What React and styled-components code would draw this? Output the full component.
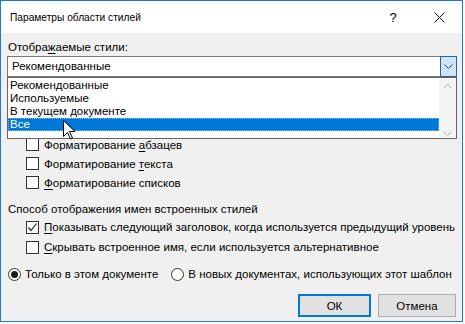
import React from 'react';
import styled, { createGlobalStyle } from 'styled-components';

const Global = createGlobalStyle`
  html, body { margin: 0; padding: 0; background: #ffffff; }
  body {
    font-family: "Liberation Sans", Arial, sans-serif;
    font-size: 11.5px;
    color: #000;
  }
  #root { width: 465px; height: 324px; }
`;

const Window = styled.div`
  position: relative;
  width: 461px;
  height: 320px;
  border: 1px solid #1f7bd1;
  background: #f0f0f0;
  display: flex;
  flex-direction: column;
  overflow: hidden;
`;

const TitleBar = styled.div`
  height: 32px;
  flex: none;
  background: #ffffff;
  display: flex;
  align-items: center;
  padding-left: 9px;
`;

const Title = styled.div`
  flex: 1;
  font-size: 10.2px;
  line-height: 16px;
  padding-top: 2px;
`;

const TitleButton = styled.div`
  width: 46px;
  height: 32px;
  display: flex;
  align-items: center;
  justify-content: center;
  font-size: 13px;
  padding-top: 1px;
  box-sizing: border-box;
`;

const Body = styled.div`
  position: relative;
  flex: 1;
  display: flex;
  flex-direction: column;
  padding: 0 5px 0 6px;
`;

const Label = styled.div`
  line-height: 16px;
  margin-top: ${p => p.$mt || 0}px;
  padding-left: 1px;
  white-space: nowrap;
`;

const U = styled.span`
  text-decoration: underline;
  text-underline-offset: 2px;
`;

const Combo = styled.div`
  margin-top: ${p => p.$mt || 0}px;
  height: 21px;
  box-sizing: border-box;
  border: 1px solid ${p => (p.$active ? '#7a7a7a' : '#adadad')};
  background: #ffffff;
  display: flex;
  align-items: stretch;
`;

const ComboText = styled.div`
  flex: 1;
  padding-left: 4px;
  line-height: 19px;
`;

const ComboButton = styled.div`
  width: 17px;
  box-sizing: border-box;
  margin: -1px -1px -1px 0;
  height: 21px;
  border: 1px solid ${p => (p.$active ? '#2c628b' : 'transparent')};
  background: ${p => (p.$active ? '#cce4f7' : 'transparent')};
  display: flex;
  align-items: center;
  justify-content: center;
`;

const CheckRow = styled.div`
  height: ${p => p.$h || 19}px;
  display: flex;
  align-items: center;
  padding-left: 19px;
  gap: 5px;
  white-space: nowrap;
`;

const Box = styled.div`
  width: 13px;
  height: 13px;
  box-sizing: border-box;
  border: 1px solid #333333;
  background: #ffffff;
  display: flex;
  align-items: center;
  justify-content: center;
  flex: none;
`;

const RadioRow = styled.div`
  margin-top: 8px;
  height: 18px;
  display: flex;
  align-items: center;
  padding-left: 1px;
  white-space: nowrap;
`;

const RadioItem = styled.div`
  display: flex;
  align-items: center;
  gap: 4px;
  margin-right: 13px;
`;

const Radio = styled.div`
  width: 13px;
  height: 13px;
  box-sizing: border-box;
  border-radius: 50%;
  border: 1px solid #333333;
  background: #ffffff;
  display: flex;
  align-items: center;
  justify-content: center;
  flex: none;
  &::after {
    content: '';
    display: ${p => (p.$on ? 'block' : 'none')};
    width: 7px;
    height: 7px;
    border-radius: 50%;
    background: #1a1a1a;
  }
`;

const Buttons = styled.div`
  margin-top: 11px;
  display: flex;
  justify-content: flex-end;
  gap: 7px;
  padding-right: 1px;
`;

const Button = styled.div`
  width: ${p => p.$w}px;
  height: 23px;
  box-sizing: border-box;
  border: ${p => (p.$default ? '2px solid #0078d7' : '1px solid #adadad')};
  background: #e1e1e1;
  display: flex;
  align-items: center;
  justify-content: center;
`;

const DropList = styled.div`
  position: absolute;
  left: 6px;
  top: 44px;
  width: 450px;
  height: 62px;
  box-sizing: border-box;
  border: 1px solid #646464;
  background: #ffffff;
  display: flex;
`;

const Items = styled.div`
  flex: 1;
  display: flex;
  flex-direction: column;
  padding-top: 1px;
`;

const Item = styled.div`
  height: 13px;
  line-height: 13px;
  padding-left: 2px;
  box-sizing: border-box;
  background: ${p => (p.$sel ? '#0078d7' : 'transparent')};
  color: ${p => (p.$sel ? '#ffffff' : '#000')};
  outline: ${p => (p.$sel ? '1px dotted #7fb9ea' : 'none')};
  outline-offset: -1px;
  white-space: nowrap;
`;

const ScrollBar = styled.div`
  width: 17px;
  background: #f4f4f4;
  display: flex;
  flex-direction: column;
  justify-content: space-between;
  align-items: center;
  padding: 6px 0 2px;
`;

const Cursor = styled.svg`
  position: absolute;
  left: 62px;
  top: 119px;
`;

const Chevron = ({ up, color = '#444' }) => (
  <svg width="9" height="5" viewBox="0 0 9 5">
    <path
      d={up ? 'M0.5 4.5 L4.5 0.5 L8.5 4.5' : 'M0.5 0.5 L4.5 4.5 L8.5 0.5'}
      fill="none"
      stroke={color}
      strokeWidth="1"
    />
  </svg>
);

const Check = () => (
  <svg width="11" height="11" viewBox="0 0 11 11">
    <path d="M1.5 5.5 L4 8.5 L9.5 1.5" fill="none" stroke="#222" strokeWidth="1.2" />
  </svg>
);

export default function App() {
  return (
    <>
      <Global />
      <Window>
        <TitleBar>
          <Title>Параметры области стилей</Title>
          <TitleButton>?</TitleButton>
          <TitleButton>
            <svg width="11" height="11" viewBox="0 0 11 11">
              <path d="M0.5 0.5 L10.5 10.5 M10.5 0.5 L0.5 10.5" stroke="#111" strokeWidth="1" />
            </svg>
          </TitleButton>
        </TitleBar>
        <Body>
          <Label $mt={6}>
            Отобра<U>ж</U>аемые стили:
          </Label>
          <Combo $mt={1} $active>
            <ComboText>Рекомендованные</ComboText>
            <ComboButton $active>
              <Chevron />
            </ComboButton>
          </Combo>
          <Label $mt={5}>Выберите способ сортировки списка:</Label>
          <Combo>
            <ComboText>По рекомендации</ComboText>
            <ComboButton>
              <Chevron />
            </ComboButton>
          </Combo>
          <Label>Выберите форматирование, отображаемое как стили:</Label>
          <CheckRow>
            <Box />
            <span>
              Форматирование <U>а</U>бзацев
            </span>
          </CheckRow>
          <CheckRow>
            <Box />
            <span>
              Форматирование <U>т</U>екста
            </span>
          </CheckRow>
          <CheckRow>
            <Box />
            <span>
              <U>Ф</U>орматирование списков
            </span>
          </CheckRow>
          <Label $mt={9}>Способ отображения имен встроенных стилей</Label>
          <CheckRow $h={20}>
            <Box>
              <Check />
            </Box>
            <span>
              <U>П</U>оказывать следующий заголовок, когда используется предыдущий уровень
            </span>
          </CheckRow>
          <CheckRow $h={20}>
            <Box />
            <span>
              <U>С</U>крывать встроенное имя, если используется альтернативное
            </span>
          </CheckRow>
          <RadioRow>
            <RadioItem>
              <Radio $on />
              <span>Только в этом документе</span>
            </RadioItem>
            <RadioItem>
              <Radio />
              <span>В новых документах, использующих этот шаблон</span>
            </RadioItem>
          </RadioRow>
          <Buttons>
            <Button $w={73} $default>
              ОК
            </Button>
            <Button $w={78}>Отмена</Button>
          </Buttons>

          <DropList>
            <Items>
              <Item>Рекомендованные</Item>
              <Item>Используемые</Item>
              <Item>В текущем документе</Item>
              <Item $sel>Все</Item>
            </Items>
            <ScrollBar>
              <Chevron up color="#b0b0b0" />
              <Chevron color="#b0b0b0" />
            </ScrollBar>
          </DropList>
        </Body>
        <Cursor width="13" height="20" viewBox="0 0 13 20">
          <path
            d="M0.5 0.5 L0.5 16.5 L4.5 12.5 L7.5 19 L9.5 18 L6.5 11.5 L12 11.5 Z"
            fill="#ffffff"
            stroke="#000"
            strokeWidth="1"
          />
        </Cursor>
      </Window>
    </>
  );
}
